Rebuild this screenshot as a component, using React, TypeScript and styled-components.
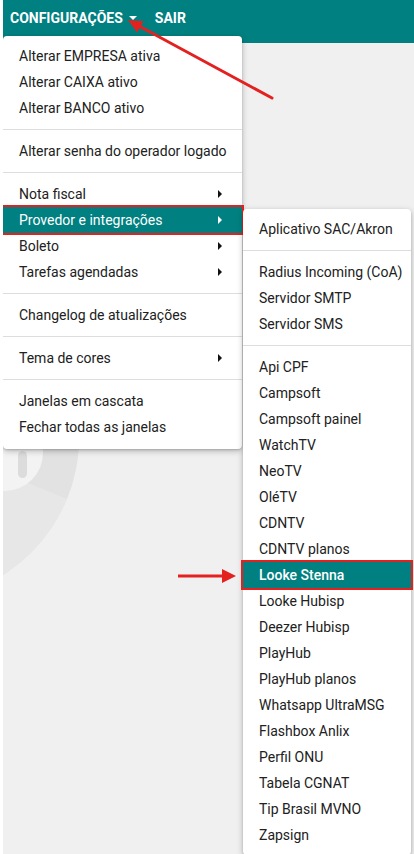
import React from 'react';
import styled, { createGlobalStyle } from 'styled-components';

const GlobalStyle = createGlobalStyle`
  html, body {
    margin: 0;
    padding: 0;
    background: #ffffff;
  }
  body {
    font-family: Roboto, "Liberation Sans", Arial, sans-serif;
    overflow: hidden;
  }
`;

const mainGroups: { label: string; sub?: boolean; active?: boolean }[][] = [
  [
    { label: 'Alterar EMPRESA ativa' },
    { label: 'Alterar CAIXA ativo' },
    { label: 'Alterar BANCO ativo' },
  ],
  [{ label: 'Alterar senha do operador logado' }],
  [
    { label: 'Nota fiscal', sub: true },
    { label: 'Provedor e integrações', sub: true, active: true },
    { label: 'Boleto', sub: true },
    { label: 'Tarefas agendadas', sub: true },
  ],
  [{ label: 'Changelog de atualizações' }],
  [{ label: 'Tema de cores', sub: true }],
  [{ label: 'Janelas em cascata' }, { label: 'Fechar todas as janelas' }],
];

const subGroups: string[][] = [
  ['Aplicativo SAC/Akron'],
  ['Radius Incoming (CoA)', 'Servidor SMTP', 'Servidor SMS'],
  [
    'Api CPF',
    'Campsoft',
    'Campsoft painel',
    'WatchTV',
    'NeoTV',
    'OléTV',
    'CDNTV',
    'CDNTV planos',
    'Looke Stenna',
    'Looke Hubisp',
    'Deezer Hubisp',
    'PlayHub',
    'PlayHub planos',
    'Whatsapp UltraMSG',
    'Flashbox Anlix',
    'Perfil ONU',
    'Tabela CGNAT',
    'Tip Brasil MVNO',
    'Zapsign',
  ],
];

const App = () => {
  return (
    <>
      <GlobalStyle />
      <Page>
        <TopBar>
          <NavItem>
            CONFIGURAÇÕES
            <CaretDown />
          </NavItem>
          <NavItem>SAIR</NavItem>
        </TopBar>
        <Content>
          {/* faded logo behind the menus */}
          <Watermark width="110" height="170" viewBox="0 0 110 170">
            <defs>
              <clipPath id="logoClip">
                <circle cx="-86" cy="-11" r="162" />
              </clipPath>
            </defs>
            <circle cx="-86" cy="-11" r="162" fill="#e7e7e7" />
            <polygon points="-86,-11 200,105 200,-200 -86,-200" fill="#e2e2e2" clipPath="url(#logoClip)" />
            <circle cx="2" cy="4" r="38" fill="#f3f3f3" />
            <rect x="15" y="2" width="9" height="27" rx="4.5" fill="#dcdcdc" />
          </Watermark>
        </Content>

        <Menu>
          {mainGroups.map((group, gi) => (
            <React.Fragment key={gi}>
              {gi > 0 && <Divider />}
              {group.map((item) => (
                <Item key={item.label} $active={item.active}>
                  <span>{item.label}</span>
                  {item.sub && <CaretRight $active={item.active} />}
                </Item>
              ))}
            </React.Fragment>
          ))}
        </Menu>

        <SubMenu>
          {subGroups.map((group, gi) => (
            <React.Fragment key={gi}>
              {gi > 0 && <Divider />}
              {group.map((label) => (
                <Item key={label} $active={label === 'Looke Stenna'} $bold={label === 'Looke Stenna'}>
                  <span>{label}</span>
                </Item>
              ))}
            </React.Fragment>
          ))}
        </SubMenu>

        <Annotations width="414" height="854" viewBox="0 0 414 854">
          <line x1="272" y1="98" x2="139" y2="26" stroke="#e3211f" strokeWidth="3" strokeLinecap="round" />
          <polygon points="128,20 143.5,21.2 137.2,32.4" fill="#e3211f" />
          <line x1="178" y1="576" x2="224" y2="576" stroke="#e3211f" strokeWidth="3" />
          <polygon points="236,576 222,569 222,583" fill="#e3211f" />
        </Annotations>
      </Page>
    </>
  );
};

export default App;

const Page = styled.div`
  position: relative;
  width: 414px;
  height: 854px;
  border-left: 3px solid #ffffff;
  box-sizing: border-box;
  display: flex;
  flex-direction: column;
  overflow: hidden;
`;

const TopBar = styled.div`
  height: 43px;
  flex-shrink: 0;
  background-color: #008080;
  display: flex;
  align-items: center;
  gap: 18px;
  padding: 0 0 8px 7px;
  box-sizing: border-box;
`;

const NavItem = styled.div`
  color: #ffffff;
  font-weight: 700;
  font-size: 14px;
  display: flex;
  align-items: center;
  cursor: pointer;
`;

const CaretDown = styled.span`
  width: 0;
  height: 0;
  margin-left: 6px;
  border-left: 4px solid transparent;
  border-right: 4px solid transparent;
  border-top: 4px solid #ffffff;
`;

const Content = styled.div`
  flex: 1;
  background-color: #f0f0f0;
`;

const Watermark = styled.svg`
  display: block;
  margin-top: 406px;
`;

const Menu = styled.div`
  position: absolute;
  left: 0;
  top: 36px;
  width: 239px;
  padding: 7px 0 9px;
  background: #ffffff;
  border-radius: 4px;
  box-shadow: 0 2px 6px rgba(0, 0, 0, 0.25), 0 1px 2px rgba(0, 0, 0, 0.15);
  z-index: 2;
`;

const SubMenu = styled.div`
  position: absolute;
  left: 240px;
  top: 209px;
  width: 168px;
  padding: 7px 0 7px;
  background: #ffffff;
  border-radius: 4px;
  box-shadow: 0 2px 6px rgba(0, 0, 0, 0.25), 0 1px 2px rgba(0, 0, 0, 0.15);
  z-index: 3;
`;

const Item = styled.div<{ $active?: boolean; $bold?: boolean }>`
  height: 26px;
  padding: 0 20px 0 16px;
  display: flex;
  align-items: center;
  justify-content: space-between;
  font-size: 14px;
  color: ${(p) => (p.$active ? '#ffffff' : '#212121')};
  background: ${(p) => (p.$active ? '#008080' : 'transparent')};
  outline: ${(p) => (p.$active ? '2px solid #e3211f' : 'none')};
  font-weight: ${(p) => (p.$bold ? 500 : 400)};
  white-space: nowrap;
  cursor: pointer;
`;

const CaretRight = styled.span<{ $active?: boolean }>`
  width: 0;
  height: 0;
  border-top: 4px solid transparent;
  border-bottom: 4px solid transparent;
  border-left: 4px solid ${(p) => (p.$active ? '#ffffff' : '#111111')};
`;

const Divider = styled.div`
  height: 1px;
  background: #dddddd;
  margin: 8px 0;
`;

const Annotations = styled.svg`
  position: absolute;
  left: -3px;
  top: 0;
  pointer-events: none;
  z-index: 5;
`;
